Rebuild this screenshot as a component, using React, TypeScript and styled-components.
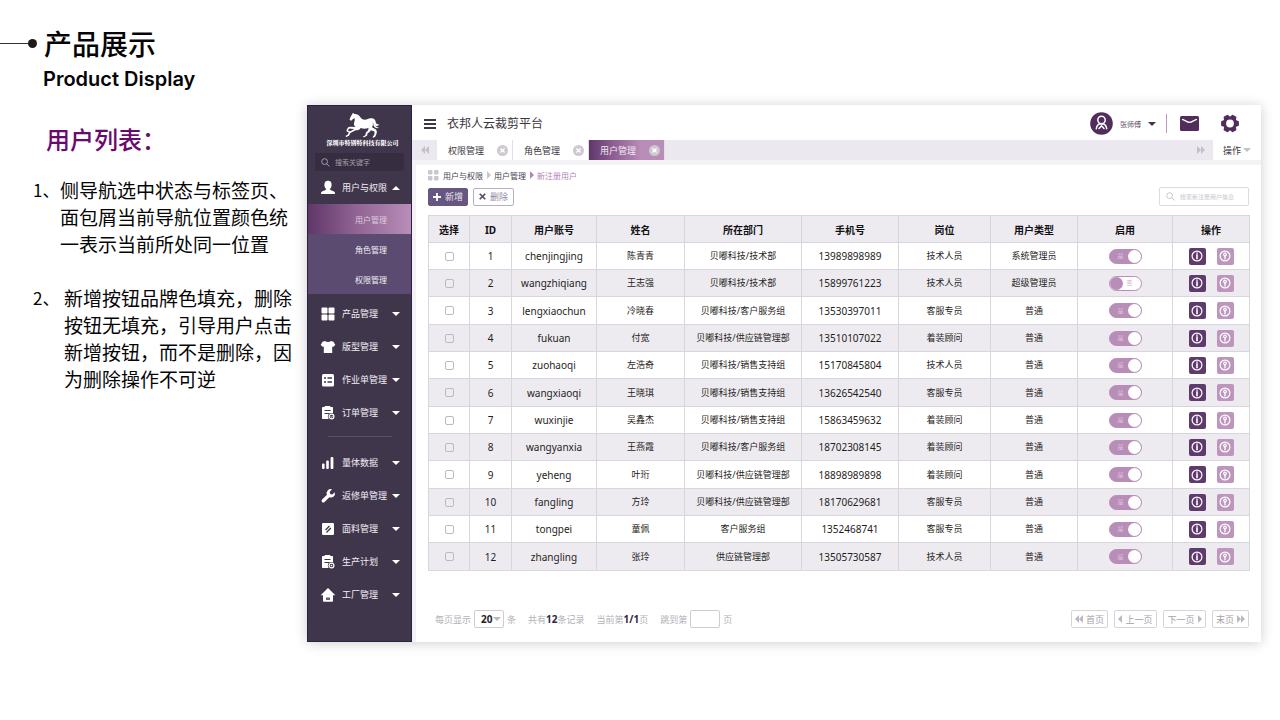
import React, { useState } from "react";
import styled, { createGlobalStyle } from "styled-components";

const GlobalStyle = createGlobalStyle`
  * { box-sizing: border-box; }
  body {
    margin: 0;
    background: #ffffff;
    color: #1c1a1f;
    font-family: "Noto Sans", "Noto Sans CJK SC", sans-serif;
  }
  h1, h2, h3, p, ol, ul { margin: 0; padding: 0; font-weight: inherit; }
  ol, ul { list-style: none; }
  button, input, select { font: inherit; color: inherit; }
  button { padding: 0; border: 0; background: none; cursor: pointer; }
  a { color: inherit; text-decoration: none; }
  svg { display: block; flex: none; }
`;

/* ---------- page ---------- */

const Page = styled.div`
  display: flex;
  align-items: flex-start;
  padding: 0 19px 40px 0;
`;

const Notes = styled.section`
  flex: none;
  width: 307px;
  padding-top: 25px;
  color: #050505;
  font-family: "Noto Sans CJK SC", sans-serif;
`;

const TitleRow = styled.div`
  display: flex;
  align-items: center;
`;

const TitleLine = styled.span`
  width: 28px;
  height: 1px;
  background: #333333;
`;

const TitleDot = styled.span`
  width: 9px;
  height: 9px;
  margin-right: 7px;
  border-radius: 50%;
  background: #1b1b1b;
`;

const Title = styled.h1`
  font-size: 28px;
  line-height: 36px;
  font-weight: 500;
`;

const Subtitle = styled.p`
  margin: 4px 0 0 43px;
  font-family: Inter, sans-serif;
  font-size: 20px;
  line-height: 28px;
  font-weight: 600;
`;

const NotesHeading = styled.h2`
  margin: 30px 0 0 46px;
  color: #6a0a6c;
  font-size: 24px;
  line-height: 32px;
  font-weight: 500;
`;

const NoteList = styled.ol`
  display: flex;
  flex-direction: column;
  gap: 27px;
  margin: 21px 0 0 33px;
  font-size: 19px;
  line-height: 27px;
`;

const Note = styled.li`
  display: flex;
`;

const NoteMark = styled.span<{ $wide?: boolean }>`
  flex: none;
  width: ${(p) => (p.$wide ? 31 : 27)}px;
  font-size: 17px;
  white-space: nowrap;
`;

const NoteText = styled.span`
  white-space: nowrap;
`;

/* ---------- application window ---------- */

const Window = styled.div`
  display: flex;
  flex: 1;
  min-width: 0;
  margin-top: 105px;
  background: #f3f2f4;
  box-shadow: 0 1px 12px rgba(0, 0, 0, 0.2);
`;

const Sidebar = styled.nav`
  flex: none;
  width: 105px;
  padding-bottom: 26px;
  border: 1px solid #2b2140;
  background: #40364b;
  color: #f1eef4;
  font-size: 9px;
`;

const Brand = styled.div`
  display: flex;
  flex-direction: column;
  align-items: center;
  padding: 6px 0 0 6px;
  height: 47px;
  color: #ffffff;
  font-family: "Noto Serif CJK SC", "Noto Sans CJK SC", serif;
  font-size: 6px;
  line-height: 9px;
  font-weight: 900;
  white-space: nowrap;
`;

const SideSearch = styled.label`
  display: flex;
  align-items: center;
  gap: 5px;
  height: 18px;
  margin: 0 7px;
  padding: 0 6px;
  border-radius: 2px;
  background: #372d41;
  color: #a39bab;
`;

const BareInput = styled.input<{ $tint: string; $size: number }>`
  flex: 1;
  min-width: 0;
  padding: 0;
  border: 0;
  outline: 0;
  background: transparent;
  font-size: ${(p) => p.$size}px;
  &::placeholder { color: ${(p) => p.$tint}; opacity: 1; }
`;

const NavButton = styled.button`
  display: flex;
  align-items: center;
  width: 100%;
  height: 33px;
  padding: 0 11px 0 13px;
  white-space: nowrap;
`;

const NavLabel = styled.span`
  flex: 1;
  margin-left: 7px;
  text-align: left;
`;

const SubMenu = styled.ul`
  margin-bottom: 3px;
  background: #5b4b70;
`;

const SubLink = styled.a<{ $active?: boolean }>`
  display: flex;
  align-items: center;
  height: 30px;
  padding-left: 47px;
  font-size: 8px;
  background: ${(p) =>
    p.$active ? "linear-gradient(90deg, #5f3768 0%, #8f6293 45%, #b88db7 100%)" : "none"};
  color: ${(p) => (p.$active ? "#ddc9de" : "#f1eef4")};
`;

const NavDivider = styled.hr`
  height: 1px;
  margin: 7px 19px 9px 20px;
  border: 0;
  background: #5a5065;
`;

const Caret = styled.span<{ $up?: boolean; $color?: string }>`
  width: 0;
  height: 0;
  border: 4px solid transparent;
  border-${(p) => (p.$up ? "top" : "bottom")}-width: 0;
  border-${(p) => (p.$up ? "bottom" : "top")}-color: ${(p) => p.$color || "#ffffff"};
`;

const Main = styled.main`
  display: flex;
  flex-direction: column;
  flex: 1;
  min-width: 0;
`;

const TopBar = styled.header`
  display: flex;
  align-items: center;
  height: 35px;
  padding: 2px 22px 0 12px;
  background: #ffffff;
`;

const IconButton = styled.button`
  display: flex;
  align-items: center;
  justify-content: center;
`;

const TopIcons = styled.div`
  display: flex;
  align-items: center;
  gap: 22px;
`;

const AppName = styled.h2`
  flex: 1;
  margin-left: 11px;
  color: #3b3640;
  font-size: 12px;
  line-height: 20px;
`;

const UserButton = styled.button`
  display: flex;
  align-items: center;
  gap: 7px;
  padding-right: 10px;
  margin-right: 13px;
  border-right: 1px solid #c493c4;
  height: 19px;
  color: #5a4b62;
  font-size: 7px;
`;

const TabBar = styled.div`
  display: flex;
  height: 20px;
  background: #ebe9ef;
  font-size: 9px;
`;

const TabScroll = styled(IconButton)`
  width: 25px;
`;

const Tab = styled.div<{ $active?: boolean }>`
  display: flex;
  align-items: center;
  justify-content: space-between;
  width: 76px;
  padding: 0 4px 0 11px;
  border-right: 1px solid #e3dfe8;
  background: ${(p) =>
    p.$active ? "linear-gradient(90deg, #5f3768 0%, #8a5c8f 30%, #b88db7 70%)" : "#ffffff"};
  color: ${(p) => (p.$active ? "#f3e8f3" : "#3b3640")};
`;

const TabSpacer = styled.div`
  flex: 1;
`;

const TabMenu = styled.button`
  display: flex;
  align-items: center;
  justify-content: center;
  gap: 2px;
  width: 48px;
  background: #ffffff;
  color: #3b3640;
`;

const Card = styled.section`
  flex: 1;
  margin: 5px 0 0 4px;
  padding: 3px 12px 0;
  background: #ffffff;
`;

const Crumbs = styled.ol`
  display: flex;
  align-items: center;
  height: 14px;
  color: #4a4450;
  font-size: 8px;
`;

const Crumb = styled.li<{ $current?: boolean }>`
  display: flex;
  align-items: center;
  gap: 3px;
  margin-left: 4px;
  color: ${(p) => (p.$current ? "#b283b5" : "inherit")};
`;

const ToolRow = styled.div`
  display: flex;
  align-items: center;
  gap: 5px;
  margin: 5px 0 9px;
`;

const ToolButton = styled.button<{ $primary?: boolean }>`
  display: flex;
  align-items: center;
  justify-content: center;
  gap: 4px;
  width: ${(p) => (p.$primary ? 40 : 41)}px;
  height: 18px;
  border: 1px solid ${(p) => (p.$primary ? "#675681" : "#b7aec4")};
  border-radius: 2px;
  background: ${(p) => (p.$primary ? "#675681" : "#ffffff")};
  color: ${(p) => (p.$primary ? "#e9e4ee" : "#9488a4")};
  font-size: 9px;
`;

const TableSearch = styled.label`
  display: flex;
  align-items: center;
  gap: 5px;
  width: 90px;
  height: 19px;
  margin-left: auto;
  padding: 0 6px;
  border: 1px solid #dddbe0;
  border-radius: 2px;
  color: #c9c6cd;
`;

const Table = styled.table`
  width: 100%;
  table-layout: fixed;
  border-collapse: collapse;
  text-align: center;
`;

const HeadCell = styled.th`
  padding: 2px 0 0;
  border: 1px solid #d8d5de;
  color: #111013;
  font-size: 10px;
  line-height: 14px;
  font-weight: 700;
`;

const Row = styled.tr<{ $shaded?: boolean }>`
  height: 27px;
  background: ${(p) => (p.$shaded ? "#edebf0" : "#ffffff")};
  &:nth-child(3n) { height: 28px; }
`;

const Cell = styled.td<{ $latin?: boolean }>`
  padding: 0;
  border: 1px solid #d8d5de;
  color: #1f1d22;
  font-size: ${(p) => (p.$latin ? 10 : 9)}px;
  line-height: 14px;
  white-space: nowrap;
`;

const TickBox = styled.input`
  appearance: none;
  display: block;
  width: 9px;
  height: 9px;
  margin: 0 auto;
  border: 1px solid #bdb9c1;
  border-radius: 2px;
  background: transparent;
  &:checked { background: #b88db7; }
`;

const Toggle = styled.label<{ $on: boolean }>`
  position: relative;
  display: flex;
  flex-direction: ${(p) => (p.$on ? "row" : "row-reverse")};
  align-items: center;
  justify-content: space-between;
  width: 33px;
  height: 15px;
  margin: 0 auto;
  padding-left: ${(p) => (p.$on ? 8 : 0)}px;
  padding-right: ${(p) => (p.$on ? 0 : 8)}px;
  border: 1px solid #b88db7;
  border-radius: 8px;
  background: ${(p) => (p.$on ? "#b88db7" : "#ffffff")};
  color: ${(p) => (p.$on ? "#dcc6dc" : "#cdb0cd")};
  font-size: 6px;
  line-height: 8px;
  cursor: pointer;
`;

const ToggleInput = styled.input`
  position: absolute;
  inset: 0;
  width: 100%;
  height: 100%;
  margin: 0;
  opacity: 0;
`;

const Knob = styled.span<{ $on: boolean }>`
  width: 13px;
  height: 13px;
  border-radius: 50%;
  background: ${(p) => (p.$on ? "#ffffff" : "#b88db7")};
`;

const Actions = styled.div`
  display: flex;
  justify-content: center;
  gap: 11px;
`;

const ActionButton = styled.button<{ $soft?: boolean }>`
  display: flex;
  align-items: center;
  justify-content: center;
  width: 17px;
  height: 17px;
  border-radius: 2px;
  background: ${(p) => (p.$soft ? "#bd95bd" : "#5f3a6c")};
  color: #ffffff;
`;

const Footer = styled.footer`
  display: flex;
  align-items: center;
  margin: 39px 0 14px;
  padding-left: 7px;
  color: #b3b0b6;
  font-size: 9px;
  white-space: nowrap;
`;

const PageField = styled.label`
  display: flex;
  align-items: center;
  gap: 3px;
`;

const Info = styled.span`
  margin-left: 12px;
`;

const Strong = styled.b`
  color: #32283f;
  font-size: 10px;
`;

const SelectWrap = styled.span`
  position: relative;
  display: flex;
`;

const SizeSelect = styled.select`
  appearance: none;
  width: 30px;
  height: 18px;
  padding: 0 0 0 6px;
  border: 1px solid #d0ccd4;
  border-radius: 2px;
  background: #ffffff;
  color: #1f1d22;
  font-size: 10px;
  font-weight: 700;
`;

const SelectCaret = styled(Caret)`
  position: absolute;
  right: 3px;
  top: 7px;
  pointer-events: none;
`;

const PageInput = styled.input`
  width: 30px;
  height: 18px;
  padding: 0 4px;
  border: 1px solid #d0ccd4;
  border-radius: 2px;
  background: #ffffff;
`;

const Pager = styled.div`
  display: flex;
  gap: 6px;
  margin-left: auto;
`;

const PagerButton = styled.button<{ $wide?: boolean }>`
  display: flex;
  align-items: center;
  justify-content: center;
  gap: 3px;
  width: ${(p) => (p.$wide ? 43 : 37)}px;
  height: 18px;
  border: 1px solid #d6d3da;
  border-radius: 2px;
  color: #a5a1a9;
`;

/* ---------- drawings ---------- */

const HorseLogo = () => (
  <svg width="36" height="26" viewBox="0 0 108 78" fill="#fff" aria-hidden="true">
    <path d="M24 2 L28 6 C34 5 41 8 45 14 C49 20 53 23 60 23 C66 23 72 18 79 19 C85 18 91 23 92 29 C93 35 97 38 103 37 C100 43 93 43 90 39 C93 45 98 47 102 46 C97 51 89 48 86 41 C85 38 85 33 83 31 C85 38 83 43 81 46 C86 50 93 51 95 56 C97 62 93 69 90 75 L83 77 L84 73 L87 70 C89 65 90 61 87 58 C80 56 73 53 70 48 C62 51 53 50 47 48 C45 53 39 55 32 55 L16 63 L12 71 L4 75 L1 72 L8 68 L12 60 L28 51 L17 50 C13 48 11 51 9 56 L15 58 L17 62 L10 61 L4 57 C6 50 9 44 15 44 L31 45 C26 40 26 33 29 26 L29 19 C25 20 22 23 19 26 L14 24 C14 19 17 14 20 9 Z" />
    <path d="M71 48 L80 51 C77 57 73 61 68 64 L66 71 L57 76 L53 74 L61 70 L63 61 C68 58 70 54 71 48 Z" />
  </svg>
);

type NavIconName =
  | "user" | "grid" | "shirt" | "sheet" | "order" | "bars"
  | "wrench" | "fabric" | "plan" | "home";

const clipboard = (
  <>
    <path d="M4 0h5l.6 1H11c.8 0 1 .4 1 1v5.500L8.500 13H2c-.6 0-1-.4-1-1V2c0-.6.3-1 1-1h1.400z" />
    <path d="M3.500 4.500h6M3.500 7.500h5" stroke="#40364b" strokeWidth="1.200" />
    <circle cx="10.500" cy="10.500" r="3.600" fill="#40364b" />
    <circle cx="10.500" cy="10.500" r="2.400" fill="none" stroke="#fff" strokeWidth="1.200" />
  </>
);

const navShapes: Record<NavIconName, React.ReactNode> = {
  user: (
    <>
      <ellipse cx="7" cy="4" rx="3.600" ry="4.200" />
      <path d="M5 7h4v1.800l4 1.700c1 .5 1 1.400 1 2.500H0c0-1.100 0-2 1-2.500l4-1.700z" />
    </>
  ),
  grid: (
    <>
      <rect x=".5" y=".5" width="6" height="6" rx="1" />
      <rect x="7.500" y=".5" width="6" height="6" rx="1" />
      <rect x=".5" y="7.500" width="6" height="6" rx="1" />
      <rect x="7.500" y="7.500" width="6" height="6" rx="1" />
    </>
  ),
  shirt: (
    <path d="M4 1c1.500 1.400 4.500 1.400 6 0l2.500.8L14.300 5l-2.300 2-.8-.6V13H2.800V6.400L2 7-.3 5l1.800-3.200z" />
  ),
  sheet: (
    <>
      <rect x="1" y="1" width="12" height="12.500" rx="1.500" />
      <path d="M3 5h2M6.500 5h4.500M3 9h2M6.500 9h4.500" stroke="#40364b" strokeWidth="1.300" />
    </>
  ),
  order: (
    <>
      {clipboard}
      <path d="M9.500 10.600l.8.8 1.400-1.600" stroke="#fff" strokeWidth=".9" fill="none" />
    </>
  ),
  bars: (
    <>
      <rect x="1" y="7.500" width="2.600" height="5.500" rx="1" />
      <rect x="5.200" y="4.500" width="2.600" height="8.500" rx="1" />
      <rect x="9.600" y="1" width="2.800" height="12" rx="1" />
    </>
  ),
  wrench: (
    <path d="M13.700 3.200a4 4 0 0 1-5.400 5L3.600 12.900a1.700 1.700 0 0 1-2.500-2.500L6 5.800A4 4 0 0 1 11 .4L8.700 2.700l.5 2.200 2.200.5z" />
  ),
  fabric: (
    <>
      <rect x="1" y="1" width="12" height="12" rx="1.200" />
      <path d="M4.500 8L8.500 4M5.500 10.500L9.800 6" stroke="#40364b" strokeWidth="1.300" />
    </>
  ),
  plan: (
    <>
      {clipboard}
      <circle cx="10.500" cy="10.500" r=".8" />
    </>
  ),
  home: (
    <>
      <path d="M7 0l7.300 7.200H12V13a.8.8 0 0 1-.8.8H2.800A.8.800 0 0 1 2 13V7.200H-.3z" />
      <path d="M5 9.500h4v2.500H5z" fill="#6b6275" />
    </>
  ),
};

const NavIcon = ({ name }: { name: NavIconName }) => (
  <svg width="14" height="14" viewBox="0 0 14 14" fill="#fff" overflow="visible" aria-hidden="true">
    {navShapes[name]}
  </svg>
);

const SearchIcon = () => (
  <svg width="9" height="9" viewBox="0 0 9 9" fill="none" stroke="currentColor" aria-hidden="true">
    <circle cx="3.600" cy="3.600" r="2.900" />
    <path d="M5.800 5.800L8.500 8.500" />
  </svg>
);

const Menu = () => (
  <svg width="12" height="10" viewBox="0 0 12 10" fill="#40364b" aria-hidden="true">
    <path d="M0 0h12v2H0zM0 4h12v2H0zM0 8h12v2H0z" />
  </svg>
);

const Avatar = () => (
  <svg width="23" height="23" viewBox="0 0 23 23" aria-hidden="true">
    <circle cx="11.500" cy="11.500" r="11.300" fill="#512d5b" />
    <g fill="none" stroke="#fff" strokeWidth="1.500" strokeLinecap="round">
      <circle cx="11.500" cy="8" r="3.700" />
      <path d="M6.300 16.800c.3-3.200 2.200-5 5.200-5s4.900 1.800 5.200 5" />
      <path d="M9 16.500l2.500-2.700 2.500 2.700" />
    </g>
  </svg>
);

const Mail = () => (
  <svg width="19" height="15" viewBox="0 0 19 15" aria-hidden="true">
    <rect width="19" height="15" rx="1.500" fill="#512d5b" />
    <path d="M2 3.300c3 .8 5 3 7.500 3s4.500-2.200 7.500-3" fill="none" stroke="#fff" strokeWidth="1.200" />
  </svg>
);

const Gear = () => (
  <svg width="18" height="19" viewBox="0 0 18 19" aria-hidden="true">
    <g fill="#512d5b">
      <circle cx="9" cy="9.500" r="7.300" />
      {[30, 90, 150, 210, 270, 330].map((a) => (
        <rect key={a} x="6.200" y=".6" width="5.600" height="5" rx="1.200" transform={`rotate(${a} 9 9.500)`} />
      ))}
    </g>
    <circle cx="9" cy="9.500" r="3.900" fill="#fff" />
  </svg>
);

const CloseDot = () => (
  <svg width="11" height="11" viewBox="0 0 11 11" aria-hidden="true">
    <circle cx="5.500" cy="5.500" r="5.500" fill="#cdc8d2" />
    <path d="M3.400 3.400l4.200 4.200M7.600 3.400L3.400 7.600" stroke="#fff" strokeWidth="1.400" />
  </svg>
);

const arrowPaths = {
  left: "M4 0v8L0 4z",
  right: "M0 0v8l4-4z",
  first: "M4 0v8L0 4zM8 0v8L4 4z",
  last: "M0 0v8l4-4zM4 0v8l4-4z",
};

const Arrow = ({ kind, color = "#bcb8c2" }: { kind: keyof typeof arrowPaths; color?: string }) => {
  const w = kind === "left" || kind === "right" ? 4 : 8;
  return (
    <svg width={w} height="8" viewBox={`0 0 ${w} 8`} fill={color} aria-hidden="true">
      <path d={arrowPaths[kind]} />
    </svg>
  );
};

const CrumbGrid = () => (
  <svg width="11" height="11" viewBox="0 0 11 11" fill="#cac6ce" aria-hidden="true">
    <rect width="4.500" height="4.500" rx="1" />
    <rect x="6" width="4.500" height="4.500" rx="1" />
    <rect y="6" width="4.500" height="4.500" rx="1" />
    <rect x="6" y="6" width="4.500" height="4.500" rx="1" />
  </svg>
);

const Plus = () => (
  <svg width="8" height="8" viewBox="0 0 8 8" stroke="#fff" strokeWidth="1.800" aria-hidden="true">
    <path d="M4 0v8M0 4h8" />
  </svg>
);

const Cross = () => (
  <svg width="7" height="7" viewBox="0 0 7 7" stroke="#57486b" strokeWidth="1.600" aria-hidden="true">
    <path d="M.7.7l5.600 5.600M6.300.7L.7 6.300" />
  </svg>
);

const InfoMark = () => (
  <svg width="12" height="12" viewBox="0 0 12 12" fill="none" stroke="#fff" aria-hidden="true">
    <circle cx="6" cy="6" r="4.900" strokeWidth="1.200" />
    <path d="M6 2.600v1.200M6 4.300v5" strokeWidth="1.600" />
  </svg>
);

const KeyMark = () => (
  <svg width="12" height="12" viewBox="0 0 12 12" fill="none" stroke="#fff" aria-hidden="true">
    <circle cx="6" cy="6" r="4.900" strokeWidth="1.200" />
    <circle cx="6" cy="4.500" r="1.300" strokeWidth="1.200" />
    <path d="M6 5.800v3.600" strokeWidth="1.300" />
  </svg>
);

/* ---------- data ---------- */

const topNav: [NavIconName, string][] = [
  ["grid", "产品管理"],
  ["shirt", "版型管理"],
  ["sheet", "作业单管理"],
  ["order", "订单管理"],
];

const bottomNav: [NavIconName, string][] = [
  ["bars", "量体数据"],
  ["wrench", "返修单管理"],
  ["fabric", "面料管理"],
  ["plan", "生产计划"],
  ["home", "工厂管理"],
];

const columns: [string, number][] = [
  ["选择", 41],
  ["ID", 42],
  ["用户账号", 85],
  ["姓名", 88],
  ["所在部门", 117],
  ["手机号", 97],
  ["岗位", 92],
  ["用户类型", 87],
  ["启用", 95],
  ["操作", 77],
];

const users = [
  ["chenjingjing", "陈青青", "贝嘟科技/技术部", "13989898989", "技术人员", "系统管理员"],
  ["wangzhiqiang", "王志强", "贝嘟科技/技术部", "15899761223", "技术人员", "超级管理员"],
  ["lengxiaochun", "冷晓春", "贝嘟科技/客户服务组", "13530397011", "客服专员", "普通"],
  ["fukuan", "付宽", "贝嘟科技/供应链管理部", "13510107022", "着装顾问", "普通"],
  ["zuohaoqi", "左浩奇", "贝嘟科技/销售支持组", "15170845804", "技术人员", "普通"],
  ["wangxiaoqi", "王晓琪", "贝嘟科技/销售支持组", "13626542540", "客服专员", "普通"],
  ["wuxinjie", "吴鑫杰", "贝嘟科技/销售支持组", "15863459632", "着装顾问", "普通"],
  ["wangyanxia", "王燕霞", "贝嘟科技/客户服务组", "18702308145", "着装顾问", "普通"],
  ["yeheng", "叶珩", "贝嘟科技/供应链管理部", "18898989898", "着装顾问", "普通"],
  ["fangling", "方玲", "贝嘟科技/供应链管理部", "18170629681", "客服专员", "普通"],
  ["tongpei", "童佩", "客户服务组", "1352468741", "客服专员", "普通"],
  ["zhangling", "张玲", "供应链管理部", "13505730587", "技术人员", "普通"],
];

/* ---------- parts ---------- */

const NavEntry = ({ icon, label, open }: { icon: NavIconName; label: string; open?: boolean }) => (
  <NavButton type="button" aria-expanded={!!open}>
    <NavIcon name={icon} />
    <NavLabel>{label}</NavLabel>
    <Caret $up={open} />
  </NavButton>
);

const EnableToggle = ({ initial, name }: { initial: boolean; name: string }) => {
  const [on, setOn] = useState(initial);
  return (
    <Toggle $on={on}>
      <ToggleInput
        type="checkbox"
        aria-label={`启用 ${name}`}
        checked={on}
        onChange={(e) => setOn(e.target.checked)}
      />
      <span>{on ? "是" : "否"}</span>
      <Knob $on={on} />
    </Toggle>
  );
};

const UserTable = () => (
  <Table>
    <colgroup>
      {columns.map(([name, width]) => (
        <col key={name} width={width} />
      ))}
    </colgroup>
    <thead>
      <Row $shaded>
        {columns.map(([name]) => (
          <HeadCell key={name} scope="col">{name}</HeadCell>
        ))}
      </Row>
    </thead>
    <tbody>
      {users.map(([account, name, dept, phone, post, type], i) => (
        <Row key={account} $shaded={i % 2 === 1}>
          <Cell><TickBox type="checkbox" aria-label={`选择 ${name}`} /></Cell>
          <Cell $latin>{i + 1}</Cell>
          <Cell $latin>{account}</Cell>
          <Cell>{name}</Cell>
          <Cell>{dept}</Cell>
          <Cell $latin>{phone}</Cell>
          <Cell>{post}</Cell>
          <Cell>{type}</Cell>
          <Cell><EnableToggle initial={i !== 1} name={name} /></Cell>
          <Cell>
            <Actions>
              <ActionButton type="button" aria-label="详情"><InfoMark /></ActionButton>
              <ActionButton type="button" aria-label="重置密码" $soft><KeyMark /></ActionButton>
            </Actions>
          </Cell>
        </Row>
      ))}
    </tbody>
  </Table>
);

export default function App() {
  return (
    <>
      <GlobalStyle />
      <Page>
        <Notes>
          <TitleRow>
            <TitleLine />
            <TitleDot />
            <Title>产品展示</Title>
          </TitleRow>
          <Subtitle>Product Display</Subtitle>
          <NotesHeading>用户列表：</NotesHeading>
          <NoteList>
            <Note>
              <NoteMark>1、</NoteMark>
              <NoteText>
                侧导航选中状态与标签页、<br />
                面包屑当前导航位置颜色统<br />
                一表示当前所处同一位置
              </NoteText>
            </Note>
            <Note>
              <NoteMark $wide>2、</NoteMark>
              <NoteText>
                新增按钮品牌色填充，删除<br />
                按钮无填充，引导用户点击<br />
                新增按钮，而不是删除，因<br />
                为删除操作不可逆
              </NoteText>
            </Note>
          </NoteList>
        </Notes>

        <Window>
          <Sidebar>
            <Brand>
              <HorseLogo />
              深圳市特别特科技有限公司
            </Brand>
            <SideSearch>
              <SearchIcon />
              <BareInput type="text" placeholder="搜索关键字" aria-label="搜索关键字" $tint="#a39bab" $size={7} />
            </SideSearch>
            <NavEntry icon="user" label="用户与权限" open />
            <SubMenu>
              <li><SubLink href="#users" $active>用户管理</SubLink></li>
              <li><SubLink href="#roles">角色管理</SubLink></li>
              <li><SubLink href="#permissions">权限管理</SubLink></li>
            </SubMenu>
            {topNav.map(([icon, label]) => (
              <NavEntry key={label} icon={icon} label={label} />
            ))}
            <NavDivider />
            {bottomNav.map(([icon, label]) => (
              <NavEntry key={label} icon={icon} label={label} />
            ))}
          </Sidebar>

          <Main>
            <TopBar>
              <IconButton type="button" aria-label="菜单"><Menu /></IconButton>
              <AppName>衣邦人云裁剪平台</AppName>
              <UserButton type="button">
                <Avatar />
                <span>张师傅</span>
                <Caret $color="#40364b" />
              </UserButton>
              <TopIcons>
                <IconButton type="button" aria-label="消息"><Mail /></IconButton>
                <IconButton type="button" aria-label="设置"><Gear /></IconButton>
              </TopIcons>
            </TopBar>

            <TabBar>
              <TabScroll type="button" aria-label="向左"><Arrow kind="first" color="#c4c0ca" /></TabScroll>
              <Tab>权限管理<IconButton type="button" aria-label="关闭权限管理"><CloseDot /></IconButton></Tab>
              <Tab>角色管理<IconButton type="button" aria-label="关闭角色管理"><CloseDot /></IconButton></Tab>
              <Tab $active>用户管理<IconButton type="button" aria-label="关闭用户管理"><CloseDot /></IconButton></Tab>
              <TabSpacer />
              <TabScroll type="button" aria-label="向右"><Arrow kind="last" color="#c4c0ca" /></TabScroll>
              <TabMenu type="button">操作<Caret $color="#c4c0ca" /></TabMenu>
            </TabBar>

            <Card>
              <Crumbs>
                <CrumbGrid />
                <Crumb>用户与权限</Crumb>
                <Crumb><Arrow kind="right" color="#cac6ce" />用户管理</Crumb>
                <Crumb $current><Arrow kind="right" color="#b283b5" />新注册用户</Crumb>
              </Crumbs>
              <ToolRow>
                <ToolButton type="button" $primary><Plus />新增</ToolButton>
                <ToolButton type="button"><Cross />删除</ToolButton>
                <TableSearch>
                  <SearchIcon />
                  <BareInput
                    type="text"
                    placeholder="搜索新注册用户信息"
                    aria-label="搜索新注册用户信息"
                    $tint="#c9c6cd"
                    $size={6}
                  />
                </TableSearch>
              </ToolRow>
              <UserTable />
              <Footer>
                <PageField>
                  每页显示
                  <SelectWrap>
                    <SizeSelect defaultValue="20">
                      <option>20</option>
                      <option>50</option>
                    </SizeSelect>
                    <SelectCaret $color="#bcb8c2" />
                  </SelectWrap>
                  条
                </PageField>
                <Info>共有<Strong>12</Strong>条记录</Info>
                <Info>当前第<Strong>1/1</Strong>页</Info>
                <Info>
                  <PageField>跳到第<PageInput type="text" />页</PageField>
                </Info>
                <Pager>
                  <PagerButton type="button"><Arrow kind="first" />首页</PagerButton>
                  <PagerButton type="button" $wide><Arrow kind="left" />上一页</PagerButton>
                  <PagerButton type="button" $wide>下一页<Arrow kind="right" /></PagerButton>
                  <PagerButton type="button">末页<Arrow kind="last" /></PagerButton>
                </Pager>
              </Footer>
            </Card>
          </Main>
        </Window>
      </Page>
    </>
  );
}
